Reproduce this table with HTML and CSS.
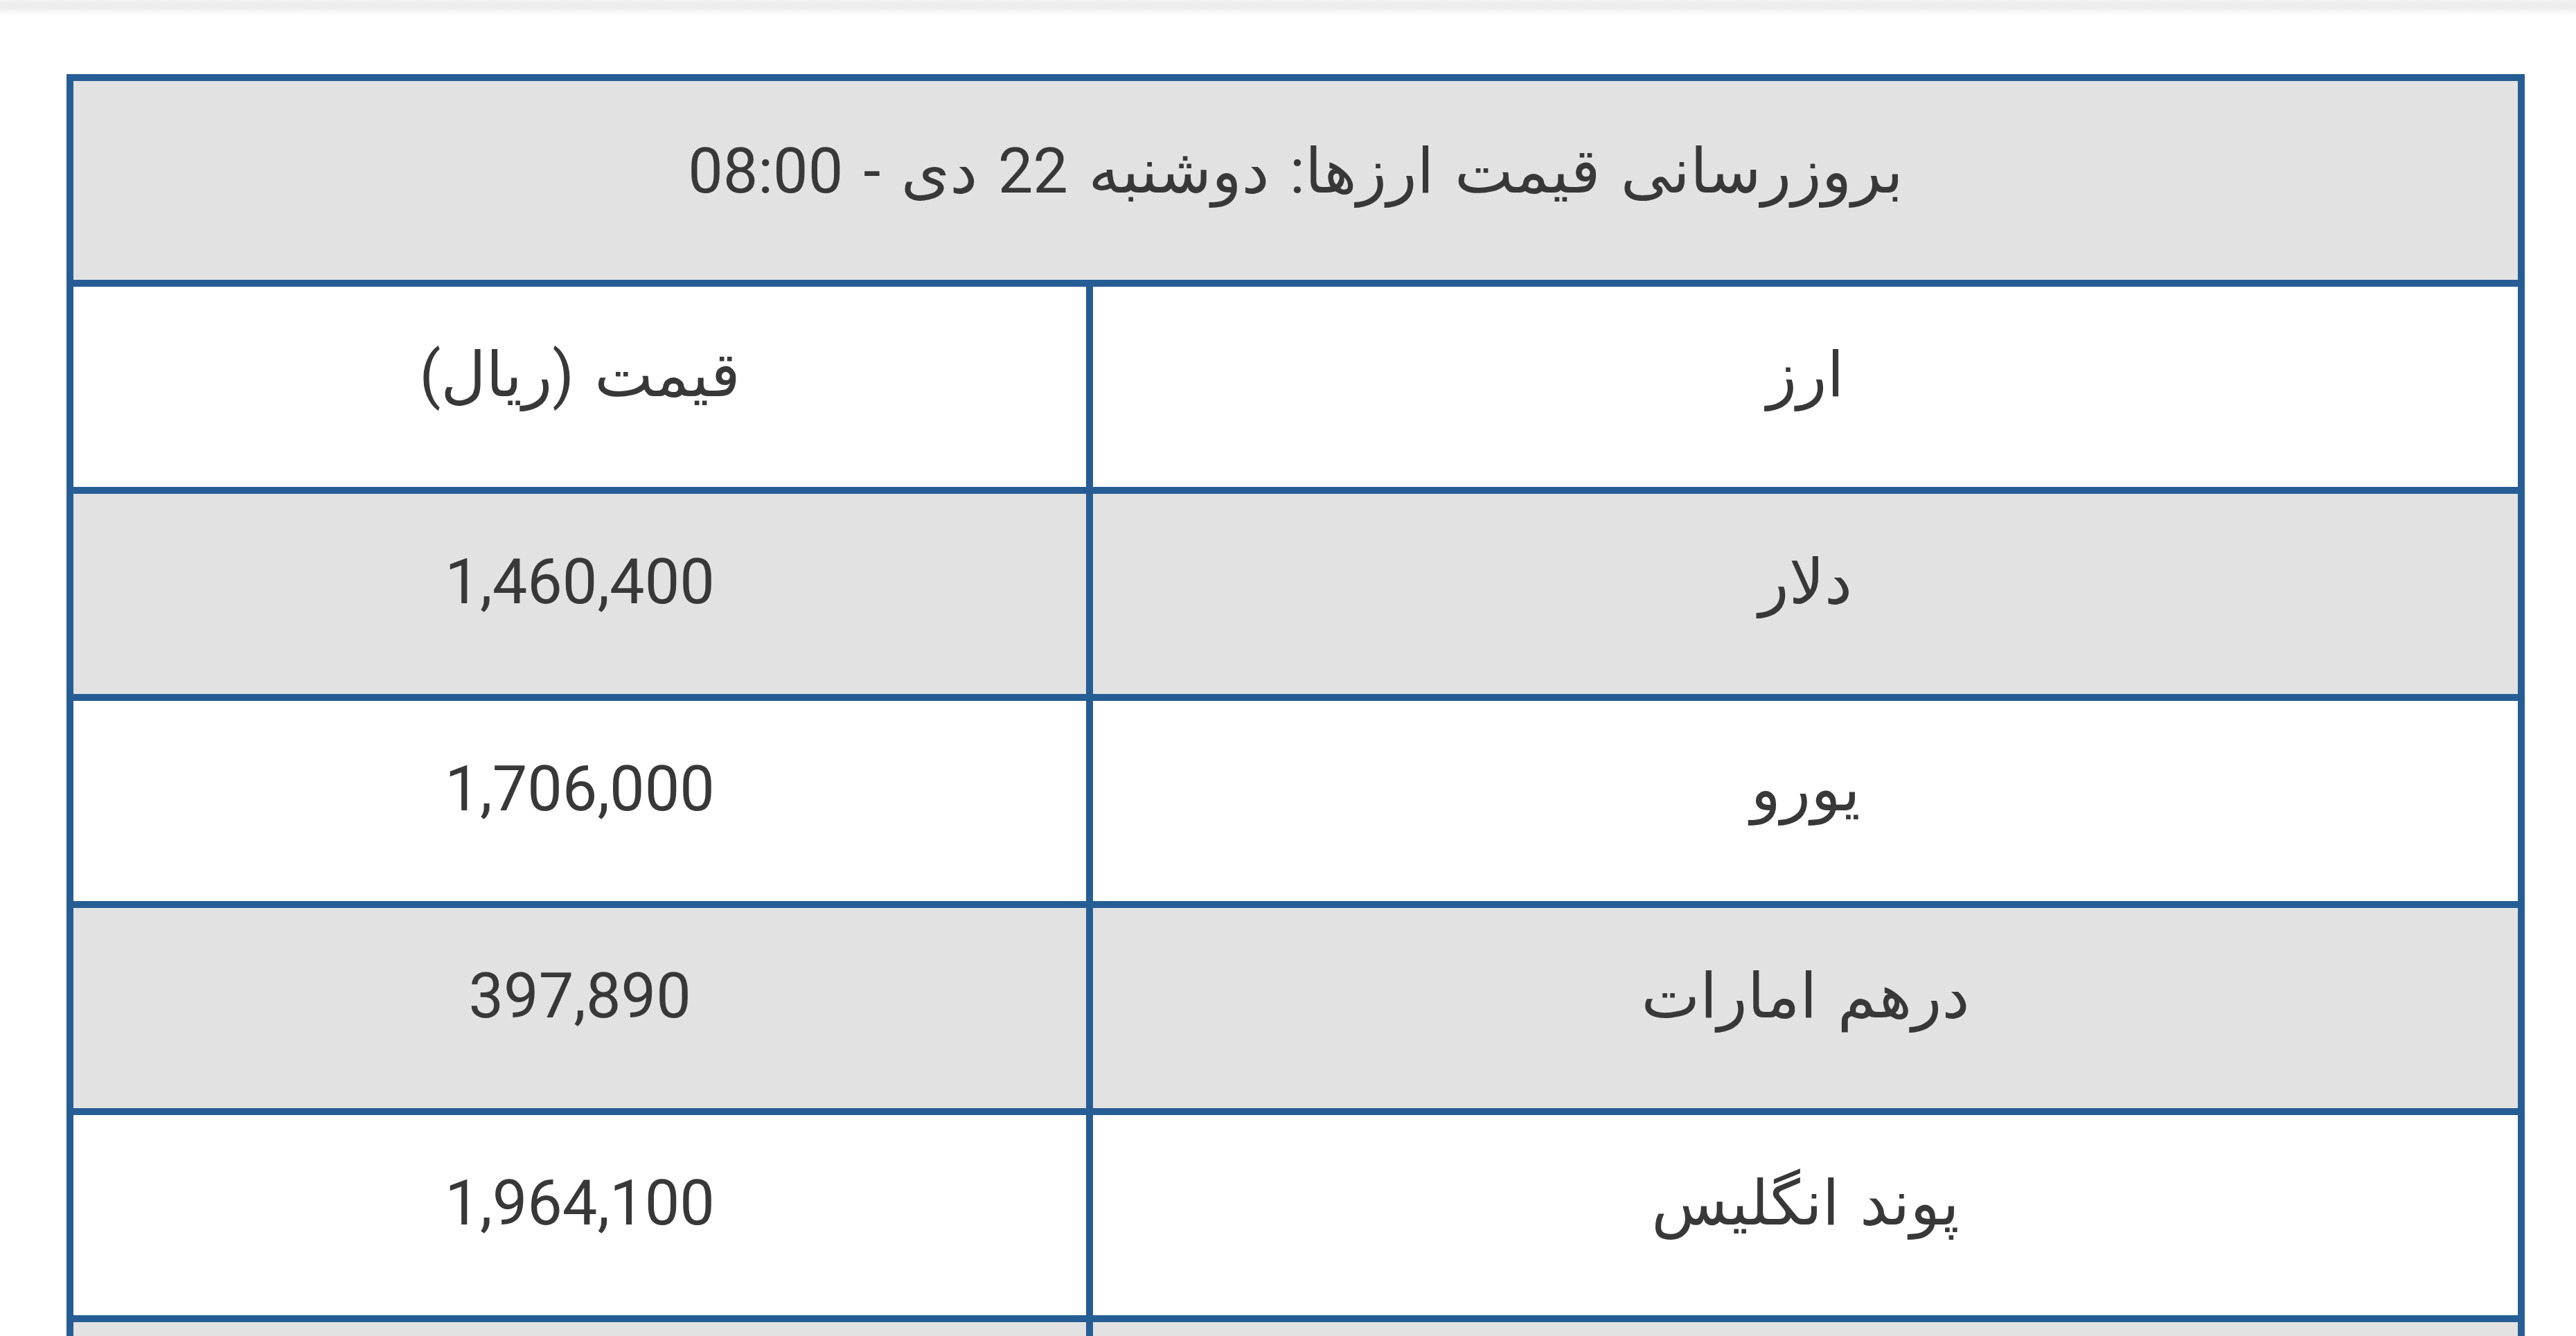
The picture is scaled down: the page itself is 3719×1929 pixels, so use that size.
FILE: index.html
```html
<!DOCTYPE html>
<html lang="fa" dir="rtl">
<head>
<meta charset="utf-8">
<title>قیمت ارزها</title>
<link rel="stylesheet" href="styles.css">
</head>
<body>
<div class="topbar"></div>
<main class="content">
  <table class="rates">
    <colgroup>
      <col class="col-name">
      <col class="col-price">
    </colgroup>
    <thead>
      <tr class="gray">
        <th colspan="2">بروزرسانی قیمت ارزها: دوشنبه 22 دی - 08:00</th>
      </tr>
    </thead>
    <tbody>
      <tr>
        <td>ارز</td>
        <td>قیمت (ریال)</td>
      </tr>
      <tr class="gray">
        <td>دلار</td>
        <td>1,460,400</td>
      </tr>
      <tr>
        <td>یورو</td>
        <td>1,706,000</td>
      </tr>
      <tr class="gray">
        <td>درهم امارات</td>
        <td>397,890</td>
      </tr>
      <tr>
        <td>پوند انگلیس</td>
        <td>1,964,100</td>
      </tr>
      <tr class="gray">
        <td></td>
        <td></td>
      </tr>
    </tbody>
  </table>
</main>
</body>
</html>
```
FILE: styles.css
```css
html, body {
  margin: 0;
  padding: 0;
  background: #ffffff;
}

body {
  font-family: Roboto, "DejaVu Sans", sans-serif;
  color: #383838;
  overflow: hidden;
}

.topbar {
  height: 22px;
  background: linear-gradient(to bottom, #f2f2f2 0, #ebebeb 10px, #ffffff 22px);
}

.content {
  padding: 85px 74px 0 96px;
}

.rates {
  width: 3549px;
  border-collapse: collapse;
  table-layout: fixed;
  border: 10px solid #265d95;
}

.col-name {
  width: 58.4%;
}

.col-price {
  width: 41.6%;
}

.rates th,
.rates td {
  border: 10px solid #265d95;
  padding: 0;
  text-align: center;
  vertical-align: middle;
  font-size: 90px;
  font-weight: normal;
  line-height: 1.2;
  word-spacing: 7px;
}

.rates th {
  height: 261px;
  padding-bottom: 26px;
}

.rates td {
  height: 255px;
  padding-bottom: 34px;
}

.gray th,
.gray td {
  background: #e2e2e2;
}
```
